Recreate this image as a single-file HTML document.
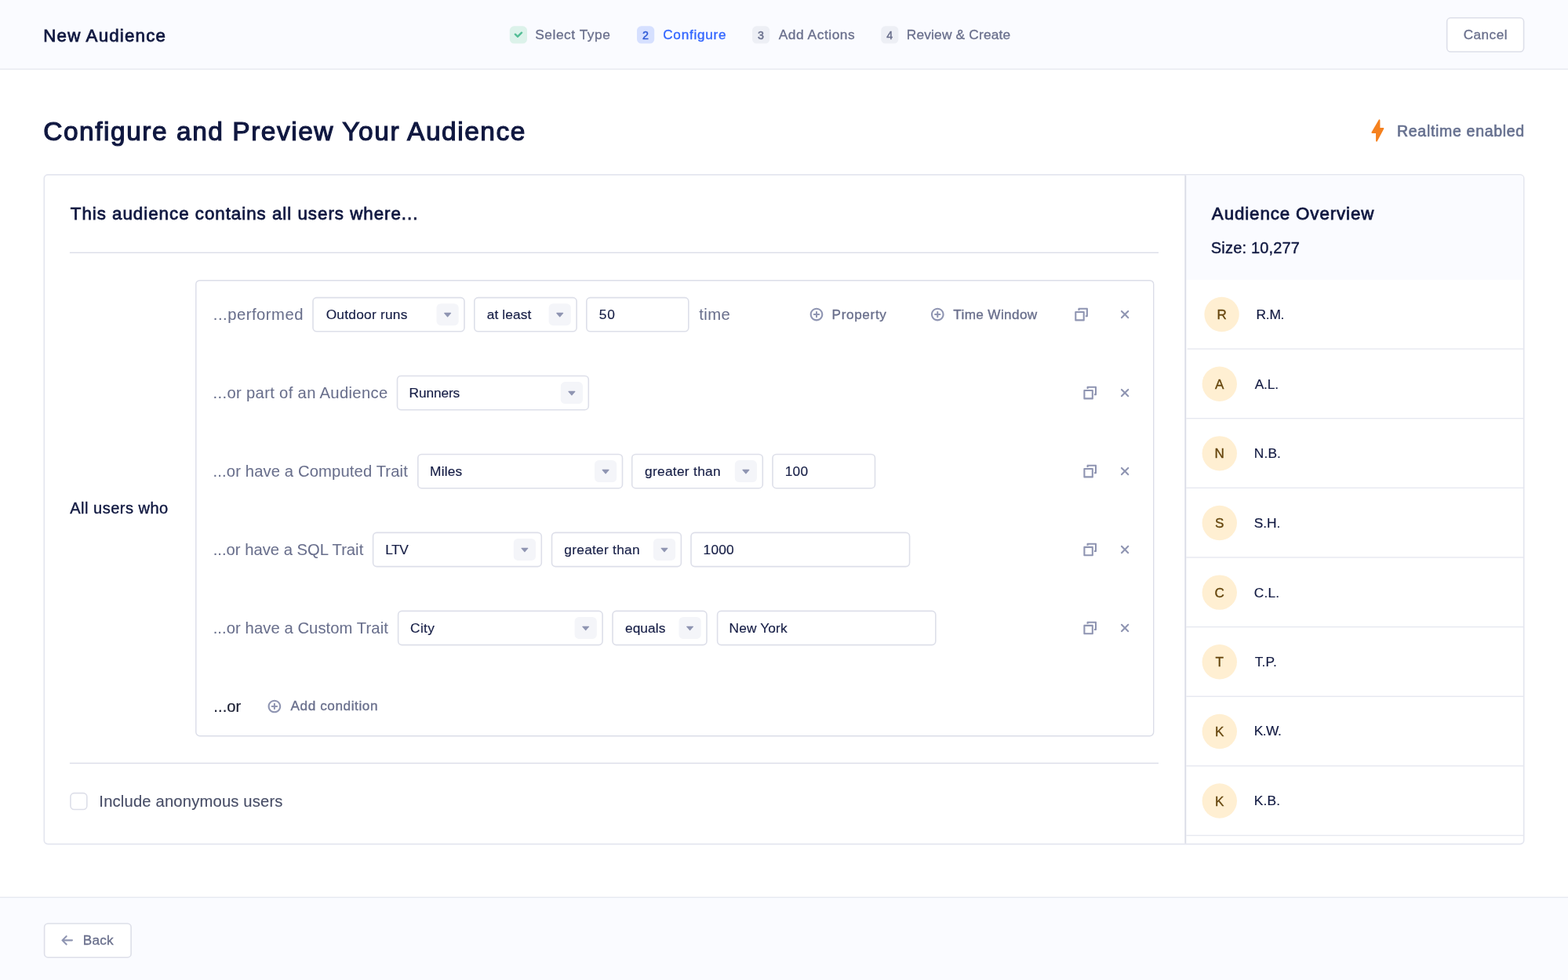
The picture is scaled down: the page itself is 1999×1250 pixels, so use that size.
<!DOCTYPE html>
<html lang="en">
<head>
<meta charset="utf-8">
<title>New Audience</title>
<style>
*{box-sizing:border-box;margin:0;padding:0}
html{width:1999px;height:1250px;overflow:hidden;background:#fff}
body{width:1999px;height:1250px;overflow:hidden;position:relative;font-family:"Liberation Sans",Arial,sans-serif;color:#101840}
#stage{position:absolute;left:0;top:0;width:1440px;height:900px;transform:scale(1.38819);transform-origin:0 0;will-change:transform}
.t{position:absolute;white-space:pre;line-height:24px;height:24px}
#g{display:block;position:absolute;left:0;top:0;overflow:visible}
</style>
</head>
<body>
<div id="stage">
<svg id="g" viewBox="0 0 1999 1250" width="1440" height="900.4502" font-family="'Liberation Sans',Arial,sans-serif">
<rect x="0" y="0" width="1999" height="87.46" rx="0" fill="#FAFBFF"/>
<rect x="0" y="87.46" width="1999" height="1.39" rx="0" fill="#E6E8F0"/>
<rect x="649.8" y="33.32" width="22.21" height="22.21" rx="5.55" fill="#DCF2EA"/>
<rect x="812" y="33.32" width="22.21" height="22.21" rx="5.55" fill="#D6E0FF"/>
<text x="823.11" y="49.6" font-size="14.3" text-anchor="middle" fill="#2F5AD6" stroke="#2F5AD6" stroke-width="0.44">2</text>
<rect x="959" y="33.32" width="22.21" height="22.21" rx="5.55" fill="#EDEFF5"/>
<text x="970.11" y="49.6" font-size="14.3" text-anchor="middle" fill="#696F8C" stroke="#696F8C" stroke-width="0.44">3</text>
<rect x="1123.2" y="33.32" width="22.21" height="22.21" rx="5.55" fill="#EDEFF5"/>
<text x="1134.31" y="49.6" font-size="14.3" text-anchor="middle" fill="#696F8C" stroke="#696F8C" stroke-width="0.44">4</text>
<path transform="translate(652.9 35.65) scale(1.0064)" d="M12 5c-.28 0-.53.11-.71.29L7 9.59l-2.29-2.3a1.003 1.003 0 00-1.42 1.42l3 3c.18.18.43.29.71.29s.53-.11.71-.29l5-5A1.003 1.003 0 0012 5z" fill="#52BD95" fill-rule="evenodd" stroke="#52BD95" stroke-width="0.5" stroke-linejoin="round"/>
<rect x="1844.7" y="22.8" width="97.9" height="43.2" rx="4.75" fill="#fff" stroke="#DDDFE9" stroke-width="1.6"/>
<path transform="translate(1736 146) scale(0.03200)" d="M702 230 L704 558 L858 558 L596 1052 L594 718 L420 718 Z" fill="#F5811F" stroke="#F5811F" stroke-width="60" stroke-linejoin="round"/>
<rect x="56.28" y="222.86" width="1886.44" height="853.73" rx="4.7" fill="#fff" stroke="#E4E6EF" stroke-width="1.7"/>
<path d="M1511.15 223.5 H1938.08 Q1942.08 223.5 1942.08 227.5 V356.77 H1511.15 Z" fill="#FAFBFF"/>
<rect x="1510.35" y="223.5" width="1.9" height="852.35" fill="#DADCE7"/>
<rect x="1513.65" y="444.36" width="428.43" height="1.39" fill="#E6E8F0"/>
<circle cx="1557.6" cy="401.05" r="22.21" fill="#FFEFD2"/>
<text x="1557.6" y="407" font-size="17.07" text-anchor="middle" fill="#66460D" stroke="#66460D" stroke-width="0.35">R</text>
<rect x="1512.25" y="533" width="429.83" height="1.39" fill="#E6E8F0"/>
<circle cx="1554.8" cy="489.7" r="22.21" fill="#FFEFD2"/>
<text x="1554.8" y="495.65" font-size="17.07" text-anchor="middle" fill="#66460D" stroke="#66460D" stroke-width="0.35">A</text>
<rect x="1512.25" y="621.65" width="429.83" height="1.39" fill="#E6E8F0"/>
<circle cx="1554.8" cy="578.35" r="22.21" fill="#FFEFD2"/>
<text x="1554.8" y="584.3" font-size="17.07" text-anchor="middle" fill="#66460D" stroke="#66460D" stroke-width="0.35">N</text>
<rect x="1512.25" y="710.3" width="429.83" height="1.39" fill="#E6E8F0"/>
<circle cx="1554.8" cy="667" r="22.21" fill="#FFEFD2"/>
<text x="1554.8" y="672.95" font-size="17.07" text-anchor="middle" fill="#66460D" stroke="#66460D" stroke-width="0.35">S</text>
<rect x="1512.25" y="798.96" width="429.83" height="1.39" fill="#E6E8F0"/>
<circle cx="1554.8" cy="755.65" r="22.21" fill="#FFEFD2"/>
<text x="1554.8" y="761.6" font-size="17.07" text-anchor="middle" fill="#66460D" stroke="#66460D" stroke-width="0.35">C</text>
<rect x="1512.25" y="887.6" width="429.83" height="1.39" fill="#E6E8F0"/>
<circle cx="1554.8" cy="844.3" r="22.21" fill="#FFEFD2"/>
<text x="1554.8" y="850.25" font-size="17.07" text-anchor="middle" fill="#66460D" stroke="#66460D" stroke-width="0.35">T</text>
<rect x="1512.25" y="976.25" width="429.83" height="1.39" fill="#E6E8F0"/>
<circle cx="1554.8" cy="932.95" r="22.21" fill="#FFEFD2"/>
<text x="1554.8" y="938.9" font-size="17.07" text-anchor="middle" fill="#66460D" stroke="#66460D" stroke-width="0.35">K</text>
<rect x="1512.25" y="1064.91" width="429.83" height="1.39" fill="#E6E8F0"/>
<circle cx="1554.8" cy="1021.6" r="22.21" fill="#FFEFD2"/>
<text x="1554.8" y="1027.55" font-size="17.07" text-anchor="middle" fill="#66460D" stroke="#66460D" stroke-width="0.35">K</text>
<rect x="88.84" y="321.61" width="1388.19" height="1.39" fill="#DBDDE8"/>
<rect x="88.84" y="972.8" width="1388.19" height="1.39" fill="#DBDDE8"/>
<rect x="249.79" y="357.69" width="1220.91" height="581.01" rx="4.86" fill="none" stroke="#DBDDE8" stroke-width="1.39"/>
<rect x="399" y="379.6" width="193" height="43.2" rx="4.75" fill="#fff" stroke="#DDDFE9" stroke-width="1.6"/>
<rect x="556.5" y="387.2" width="28.2" height="28" rx="5.55" fill="#F4F5F9"/>
<path transform="translate(561.58 392.08) scale(1.1279)" d="M12 6.5c0-.28-.22-.5-.5-.5h-7a.495.495 0 00-.37.83l3.5 4c.09.1.22.17.37.17s.28-.07.37-.17l3.5-4c.08-.09.13-.2.13-.33z" fill="#8F95B2" fill-rule="evenodd"/>
<rect x="604.8" y="379.6" width="130.3" height="43.2" rx="4.75" fill="#fff" stroke="#DDDFE9" stroke-width="1.6"/>
<rect x="699.6" y="387.2" width="28.2" height="28" rx="5.55" fill="#F4F5F9"/>
<path transform="translate(704.68 392.08) scale(1.1279)" d="M12 6.5c0-.28-.22-.5-.5-.5h-7a.495.495 0 00-.37.83l3.5 4c.09.1.22.17.37.17s.28-.07.37-.17l3.5-4c.08-.09.13-.2.13-.33z" fill="#8F95B2" fill-rule="evenodd"/>
<rect x="747.8" y="379.6" width="130" height="43.2" rx="4.75" fill="#fff" stroke="#DDDFE9" stroke-width="1.6"/>
<path transform="translate(1032.67 392.77) scale(1.0411)" d="M10.99 6.99h-2v-2c0-.55-.45-1-1-1s-1 .45-1 1v2h-2c-.55 0-1 .45-1 1s.45 1 1 1h2v2c0 .55.45 1 1 1s1-.45 1-1v-2h2c.55 0 1-.45 1-1s-.45-1-1-1zm-3-7c-4.42 0-8 3.58-8 8s3.58 8 8 8 8-3.58 8-8-3.58-8-8-8zm0 14c-3.31 0-6-2.69-6-6s2.69-6 6-6 6 2.69 6 6-2.69 6-6 6z" fill="#8F95B2" fill-rule="evenodd"/>
<path transform="translate(1186.97 392.77) scale(1.0411)" d="M10.99 6.99h-2v-2c0-.55-.45-1-1-1s-1 .45-1 1v2h-2c-.55 0-1 .45-1 1s.45 1 1 1h2v2c0 .55.45 1 1 1s1-.45 1-1v-2h2c.55 0 1-.45 1-1s-.45-1-1-1zm-3-7c-4.42 0-8 3.58-8 8s3.58 8 8 8 8-3.58 8-8-3.58-8-8-8zm0 14c-3.31 0-6-2.69-6-6s2.69-6 6-6 6 2.69 6 6-2.69 6-6 6z" fill="#8F95B2" fill-rule="evenodd"/>
<path transform="translate(1370.27 392.77) scale(1.0411)" d="M15 0H5c-.55 0-1 .45-1 1v2h2V2h8v7h-1v2h2c.55 0 1-.45 1-1V1c0-.55-.45-1-1-1zm-4 4H1c-.55 0-1 .45-1 1v10c0 .55.45 1 1 1h10c.55 0 1-.45 1-1V5c0-.55-.45-1-1-1zm-1 10H2V6h8v8z" fill="#8F95B2" fill-rule="evenodd"/>
<path transform="translate(1425.77 392.77) scale(1.0411)" d="M9.41 8l3.29-3.29c.19-.18.3-.43.3-.71a1.003 1.003 0 00-1.71-.71L8 6.59l-3.29-3.3a1.003 1.003 0 00-1.42 1.42L6.59 8 3.3 11.29c-.19.18-.3.43-.3.71a1.003 1.003 0 001.71.71L8 9.41l3.29 3.29c.18.19.43.3.71.3a1.003 1.003 0 00.71-1.71L9.41 8z" fill="#8F95B2" fill-rule="evenodd"/>
<rect x="506.5" y="479.5" width="243.8" height="43.2" rx="4.75" fill="#fff" stroke="#DDDFE9" stroke-width="1.6"/>
<rect x="714.8" y="487.1" width="28.2" height="28" rx="5.55" fill="#F4F5F9"/>
<path transform="translate(719.88 491.98) scale(1.1279)" d="M12 6.5c0-.28-.22-.5-.5-.5h-7a.495.495 0 00-.37.83l3.5 4c.09.1.22.17.37.17s.28-.07.37-.17l3.5-4c.08-.09.13-.2.13-.33z" fill="#8F95B2" fill-rule="evenodd"/>
<rect x="532.8" y="579.5" width="260.7" height="43.2" rx="4.75" fill="#fff" stroke="#DDDFE9" stroke-width="1.6"/>
<rect x="758" y="587.1" width="28.2" height="28" rx="5.55" fill="#F4F5F9"/>
<path transform="translate(763.08 591.98) scale(1.1279)" d="M12 6.5c0-.28-.22-.5-.5-.5h-7a.495.495 0 00-.37.83l3.5 4c.09.1.22.17.37.17s.28-.07.37-.17l3.5-4c.08-.09.13-.2.13-.33z" fill="#8F95B2" fill-rule="evenodd"/>
<rect x="805.7" y="579.5" width="166.6" height="43.2" rx="4.75" fill="#fff" stroke="#DDDFE9" stroke-width="1.6"/>
<rect x="936.8" y="587.1" width="28.2" height="28" rx="5.55" fill="#F4F5F9"/>
<path transform="translate(941.88 591.98) scale(1.1279)" d="M12 6.5c0-.28-.22-.5-.5-.5h-7a.495.495 0 00-.37.83l3.5 4c.09.1.22.17.37.17s.28-.07.37-.17l3.5-4c.08-.09.13-.2.13-.33z" fill="#8F95B2" fill-rule="evenodd"/>
<rect x="985" y="579.5" width="130.5" height="43.2" rx="4.75" fill="#fff" stroke="#DDDFE9" stroke-width="1.6"/>
<rect x="475.6" y="679.4" width="214.7" height="43.2" rx="4.75" fill="#fff" stroke="#DDDFE9" stroke-width="1.6"/>
<rect x="654.8" y="687" width="28.2" height="28" rx="5.55" fill="#F4F5F9"/>
<path transform="translate(659.88 691.88) scale(1.1279)" d="M12 6.5c0-.28-.22-.5-.5-.5h-7a.495.495 0 00-.37.83l3.5 4c.09.1.22.17.37.17s.28-.07.37-.17l3.5-4c.08-.09.13-.2.13-.33z" fill="#8F95B2" fill-rule="evenodd"/>
<rect x="703.5" y="679.4" width="164.9" height="43.2" rx="4.75" fill="#fff" stroke="#DDDFE9" stroke-width="1.6"/>
<rect x="832.9" y="687" width="28.2" height="28" rx="5.55" fill="#F4F5F9"/>
<path transform="translate(837.98 691.88) scale(1.1279)" d="M12 6.5c0-.28-.22-.5-.5-.5h-7a.495.495 0 00-.37.83l3.5 4c.09.1.22.17.37.17s.28-.07.37-.17l3.5-4c.08-.09.13-.2.13-.33z" fill="#8F95B2" fill-rule="evenodd"/>
<rect x="881" y="679.4" width="278.6" height="43.2" rx="4.75" fill="#fff" stroke="#DDDFE9" stroke-width="1.6"/>
<rect x="507.6" y="779.4" width="260.5" height="43.2" rx="4.75" fill="#fff" stroke="#DDDFE9" stroke-width="1.6"/>
<rect x="732.6" y="787" width="28.2" height="28" rx="5.55" fill="#F4F5F9"/>
<path transform="translate(737.68 791.88) scale(1.1279)" d="M12 6.5c0-.28-.22-.5-.5-.5h-7a.495.495 0 00-.37.83l3.5 4c.09.1.22.17.37.17s.28-.07.37-.17l3.5-4c.08-.09.13-.2.13-.33z" fill="#8F95B2" fill-rule="evenodd"/>
<rect x="781" y="779.4" width="120" height="43.2" rx="4.75" fill="#fff" stroke="#DDDFE9" stroke-width="1.6"/>
<rect x="865.5" y="787" width="28.2" height="28" rx="5.55" fill="#F4F5F9"/>
<path transform="translate(870.58 791.88) scale(1.1279)" d="M12 6.5c0-.28-.22-.5-.5-.5h-7a.495.495 0 00-.37.83l3.5 4c.09.1.22.17.37.17s.28-.07.37-.17l3.5-4c.08-.09.13-.2.13-.33z" fill="#8F95B2" fill-rule="evenodd"/>
<rect x="914.6" y="779.4" width="278.2" height="43.2" rx="4.75" fill="#fff" stroke="#DDDFE9" stroke-width="1.6"/>
<path transform="translate(1381.37 492.77) scale(1.0411)" d="M15 0H5c-.55 0-1 .45-1 1v2h2V2h8v7h-1v2h2c.55 0 1-.45 1-1V1c0-.55-.45-1-1-1zm-4 4H1c-.55 0-1 .45-1 1v10c0 .55.45 1 1 1h10c.55 0 1-.45 1-1V5c0-.55-.45-1-1-1zm-1 10H2V6h8v8z" fill="#8F95B2" fill-rule="evenodd"/>
<path transform="translate(1425.77 492.77) scale(1.0411)" d="M9.41 8l3.29-3.29c.19-.18.3-.43.3-.71a1.003 1.003 0 00-1.71-.71L8 6.59l-3.29-3.3a1.003 1.003 0 00-1.42 1.42L6.59 8 3.3 11.29c-.19.18-.3.43-.3.71a1.003 1.003 0 001.71.71L8 9.41l3.29 3.29c.18.19.43.3.71.3a1.003 1.003 0 00.71-1.71L9.41 8z" fill="#8F95B2" fill-rule="evenodd"/>
<path transform="translate(1381.37 592.77) scale(1.0411)" d="M15 0H5c-.55 0-1 .45-1 1v2h2V2h8v7h-1v2h2c.55 0 1-.45 1-1V1c0-.55-.45-1-1-1zm-4 4H1c-.55 0-1 .45-1 1v10c0 .55.45 1 1 1h10c.55 0 1-.45 1-1V5c0-.55-.45-1-1-1zm-1 10H2V6h8v8z" fill="#8F95B2" fill-rule="evenodd"/>
<path transform="translate(1425.77 592.77) scale(1.0411)" d="M9.41 8l3.29-3.29c.19-.18.3-.43.3-.71a1.003 1.003 0 00-1.71-.71L8 6.59l-3.29-3.3a1.003 1.003 0 00-1.42 1.42L6.59 8 3.3 11.29c-.19.18-.3.43-.3.71a1.003 1.003 0 001.71.71L8 9.41l3.29 3.29c.18.19.43.3.71.3a1.003 1.003 0 00.71-1.71L9.41 8z" fill="#8F95B2" fill-rule="evenodd"/>
<path transform="translate(1381.37 692.67) scale(1.0411)" d="M15 0H5c-.55 0-1 .45-1 1v2h2V2h8v7h-1v2h2c.55 0 1-.45 1-1V1c0-.55-.45-1-1-1zm-4 4H1c-.55 0-1 .45-1 1v10c0 .55.45 1 1 1h10c.55 0 1-.45 1-1V5c0-.55-.45-1-1-1zm-1 10H2V6h8v8z" fill="#8F95B2" fill-rule="evenodd"/>
<path transform="translate(1425.77 692.67) scale(1.0411)" d="M9.41 8l3.29-3.29c.19-.18.3-.43.3-.71a1.003 1.003 0 00-1.71-.71L8 6.59l-3.29-3.3a1.003 1.003 0 00-1.42 1.42L6.59 8 3.3 11.29c-.19.18-.3.43-.3.71a1.003 1.003 0 001.71.71L8 9.41l3.29 3.29c.18.19.43.3.71.3a1.003 1.003 0 00.71-1.71L9.41 8z" fill="#8F95B2" fill-rule="evenodd"/>
<path transform="translate(1381.37 792.67) scale(1.0411)" d="M15 0H5c-.55 0-1 .45-1 1v2h2V2h8v7h-1v2h2c.55 0 1-.45 1-1V1c0-.55-.45-1-1-1zm-4 4H1c-.55 0-1 .45-1 1v10c0 .55.45 1 1 1h10c.55 0 1-.45 1-1V5c0-.55-.45-1-1-1zm-1 10H2V6h8v8z" fill="#8F95B2" fill-rule="evenodd"/>
<path transform="translate(1425.77 792.67) scale(1.0411)" d="M9.41 8l3.29-3.29c.19-.18.3-.43.3-.71a1.003 1.003 0 00-1.71-.71L8 6.59l-3.29-3.3a1.003 1.003 0 00-1.42 1.42L6.59 8 3.3 11.29c-.19.18-.3.43-.3.71a1.003 1.003 0 001.71.71L8 9.41l3.29 3.29c.18.19.43.3.71.3a1.003 1.003 0 00.71-1.71L9.41 8z" fill="#8F95B2" fill-rule="evenodd"/>
<path transform="translate(341.57 892.67) scale(1.0411)" d="M10.99 6.99h-2v-2c0-.55-.45-1-1-1s-1 .45-1 1v2h-2c-.55 0-1 .45-1 1s.45 1 1 1h2v2c0 .55.45 1 1 1s1-.45 1-1v-2h2c.55 0 1-.45 1-1s-.45-1-1-1zm-3-7c-4.42 0-8 3.58-8 8s3.58 8 8 8 8-3.58 8-8-3.58-8-8-8zm0 14c-3.31 0-6-2.69-6-6s2.69-6 6-6 6 2.69 6 6-2.69 6-6 6z" fill="#8F95B2" fill-rule="evenodd"/>
<rect x="89.9" y="1011.6" width="20.9" height="20.9" rx="4.75" fill="#fff" stroke="#DDDFE9" stroke-width="1.6"/>
<rect x="0" y="1145.26" width="1999" height="104.74" rx="0" fill="#FAFBFF"/>
<rect x="0" y="1143.87" width="1999" height="1.39" rx="0" fill="#E6E8F0"/>
<rect x="56.6" y="1178" width="110.5" height="43.2" rx="4.75" fill="#fff" stroke="#DDDFE9" stroke-width="1.6"/>
<path transform="translate(77.37 1191.07) scale(1.0411)" d="M13.99 6.99H4.41L7.7 3.7a1.003 1.003 0 00-1.42-1.42l-5 5c-.18.18-.29.43-.29.71s.11.53.29.71l5 5a1.003 1.003 0 001.42-1.42L4.41 8.99H14c.55 0 1-.45 1-1s-.45-1-1.01-1z" fill="#8F95B2" fill-rule="evenodd"/>
</svg>
<span class="t" style="left:39.81px;top:19.82px;font-size:16.08px;letter-spacing:0.851px;color:#101840;-webkit-text-stroke:0.56px #101840;">New Audience</span>
<span class="t" style="left:491.48px;top:20.02px;font-size:12.48px;letter-spacing:0.396px;color:#696F8C;-webkit-text-stroke:0.22px #696F8C;">Select Type</span>
<span class="t" style="left:608.89px;top:20.02px;font-size:12.36px;letter-spacing:0.540px;color:#3366FF;-webkit-text-stroke:0.25px #3366FF;">Configure</span>
<span class="t" style="left:715.15px;top:20.02px;font-size:12.48px;letter-spacing:0.396px;color:#696F8C;-webkit-text-stroke:0.22px #696F8C;">Add Actions</span>
<span class="t" style="left:832.57px;top:20.02px;font-size:12.48px;letter-spacing:0.129px;color:#696F8C;-webkit-text-stroke:0.22px #696F8C;">Review &amp; Create</span>
<span class="t" style="left:1344.02px;top:19.87px;font-size:12.36px;letter-spacing:0.331px;color:#696F8C;-webkit-text-stroke:0.22px #696F8C;">Cancel</span>
<span class="t" style="left:39.81px;top:109.16px;font-size:24.12px;letter-spacing:1.106px;color:#101840;-webkit-text-stroke:0.84px #101840;">Configure and Preview Your Audience</span>
<span class="t" style="left:1283.01px;top:108.13px;font-size:14.07px;letter-spacing:0.490px;color:#66708F;-webkit-text-stroke:0.45px #66708F;">Realtime enabled</span>
<span class="t" style="left:64.66px;top:183.99px;font-size:16.08px;letter-spacing:0.711px;color:#101840;-webkit-text-stroke:0.56px #101840;">This audience contains all users where...</span>
<span class="t" style="left:64.30px;top:454.84px;font-size:14.42px;letter-spacing:0.360px;color:#101840;-webkit-text-stroke:0.29px #101840;">All users who</span>
<span class="t" style="left:195.77px;top:276.98px;font-size:14.56px;letter-spacing:0.380px;color:#696F8C;-webkit-text-stroke:0.04px #696F8C;">...performed</span>
<span class="t" style="left:299.43px;top:277.33px;font-size:12.48px;letter-spacing:0.177px;color:#151D45;-webkit-text-stroke:0.12px #151D45;">Outdoor runs</span>
<span class="t" style="left:447.10px;top:277.33px;font-size:12.48px;letter-spacing:0.082px;color:#151D45;-webkit-text-stroke:0.12px #151D45;">at least</span>
<span class="t" style="left:550.19px;top:277.19px;font-size:12.48px;letter-spacing:0.576px;color:#151D45;-webkit-text-stroke:0.12px #151D45;">50</span>
<span class="t" style="left:641.96px;top:276.98px;font-size:14.56px;letter-spacing:0.336px;color:#696F8C;-webkit-text-stroke:0.04px #696F8C;">time</span>
<span class="t" style="left:763.99px;top:277.19px;font-size:12.36px;letter-spacing:0.463px;color:#696F8C;-webkit-text-stroke:0.25px #696F8C;">Property</span>
<span class="t" style="left:875.43px;top:277.19px;font-size:12.36px;letter-spacing:0.267px;color:#696F8C;-webkit-text-stroke:0.25px #696F8C;">Time Window</span>
<span class="t" style="left:195.62px;top:349.02px;font-size:14.56px;letter-spacing:0.246px;color:#696F8C;-webkit-text-stroke:0.04px #696F8C;">...or part of an Audience</span>
<span class="t" style="left:375.71px;top:349.22px;font-size:12.48px;letter-spacing:-0.084px;color:#151D45;-webkit-text-stroke:0.12px #151D45;">Runners</span>
<span class="t" style="left:195.62px;top:421.05px;font-size:14.56px;letter-spacing:0.100px;color:#696F8C;-webkit-text-stroke:0.04px #696F8C;">...or have a Computed Trait</span>
<span class="t" style="left:394.80px;top:421.26px;font-size:12.48px;letter-spacing:0.126px;color:#151D45;-webkit-text-stroke:0.12px #151D45;">Miles</span>
<span class="t" style="left:592.18px;top:421.26px;font-size:12.48px;letter-spacing:0.210px;color:#151D45;-webkit-text-stroke:0.12px #151D45;">greater than</span>
<span class="t" style="left:720.84px;top:421.26px;font-size:12.48px;letter-spacing:0.180px;color:#151D45;-webkit-text-stroke:0.12px #151D45;">100</span>
<span class="t" style="left:195.70px;top:493.09px;font-size:14.56px;letter-spacing:0.014px;color:#696F8C;-webkit-text-stroke:0.04px #696F8C;">...or have a SQL Trait</span>
<span class="t" style="left:353.81px;top:493.29px;font-size:12.48px;letter-spacing:-0.288px;color:#151D45;-webkit-text-stroke:0.12px #151D45;">LTV</span>
<span class="t" style="left:518.20px;top:493.29px;font-size:12.48px;letter-spacing:0.190px;color:#151D45;-webkit-text-stroke:0.12px #151D45;">greater than</span>
<span class="t" style="left:645.85px;top:493.29px;font-size:12.48px;letter-spacing:0.144px;color:#151D45;-webkit-text-stroke:0.12px #151D45;">1000</span>
<span class="t" style="left:195.70px;top:565.12px;font-size:14.56px;letter-spacing:0.063px;color:#696F8C;-webkit-text-stroke:0.04px #696F8C;">...or have a Custom Trait</span>
<span class="t" style="left:376.79px;top:565.33px;font-size:12.48px;letter-spacing:0.264px;color:#151D45;-webkit-text-stroke:0.12px #151D45;">City</span>
<span class="t" style="left:574.10px;top:565.33px;font-size:12.48px;letter-spacing:0.058px;color:#151D45;-webkit-text-stroke:0.12px #151D45;">equals</span>
<span class="t" style="left:669.62px;top:565.33px;font-size:12.48px;letter-spacing:0.093px;color:#151D45;-webkit-text-stroke:0.12px #151D45;">New York</span>
<span class="t" style="left:196.20px;top:637.09px;font-size:14.56px;letter-spacing:0.036px;color:#1b1f33;-webkit-text-stroke:0.15px #1b1f33;">...or</span>
<span class="t" style="left:266.94px;top:637.29px;font-size:12.36px;letter-spacing:0.420px;color:#696F8C;-webkit-text-stroke:0.25px #696F8C;">Add condition</span>
<span class="t" style="left:91.03px;top:724.47px;font-size:14.56px;letter-spacing:0.131px;color:#474D66;-webkit-text-stroke:0.09px #474D66;">Include anonymous users</span>
<span class="t" style="left:76.19px;top:852.11px;font-size:12.36px;letter-spacing:0.144px;color:#696F8C;-webkit-text-stroke:0.25px #696F8C;">Back</span>
<span class="t" style="left:1112.86px;top:183.99px;font-size:16.08px;letter-spacing:0.639px;color:#101840;-webkit-text-stroke:0.56px #101840;">Audience Overview</span>
<span class="t" style="left:1112.14px;top:216.25px;font-size:14.42px;letter-spacing:0.124px;color:#101840;-webkit-text-stroke:0.29px #101840;">Size: 10,277</span>
<span class="t" style="left:1153.70px;top:277.11px;font-size:12.48px;letter-spacing:-0.168px;color:#101840;-webkit-text-stroke:0.12px #101840;">R.M.</span>
<span class="t" style="left:1152.41px;top:340.97px;font-size:12.48px;letter-spacing:-0.144px;color:#101840;-webkit-text-stroke:0.12px #101840;">A.L.</span>
<span class="t" style="left:1151.69px;top:404.83px;font-size:12.48px;letter-spacing:0.120px;color:#101840;-webkit-text-stroke:0.12px #101840;">N.B.</span>
<span class="t" style="left:1151.69px;top:468.69px;font-size:12.48px;letter-spacing:0.000px;color:#101840;-webkit-text-stroke:0.12px #101840;">S.H.</span>
<span class="t" style="left:1151.69px;top:532.55px;font-size:12.48px;letter-spacing:0.120px;color:#101840;-webkit-text-stroke:0.12px #101840;">C.L.</span>
<span class="t" style="left:1152.41px;top:596.41px;font-size:12.48px;letter-spacing:0.120px;color:#101840;-webkit-text-stroke:0.12px #101840;">T.P.</span>
<span class="t" style="left:1151.69px;top:660.27px;font-size:12.48px;letter-spacing:-0.360px;color:#101840;-webkit-text-stroke:0.12px #101840;">K.W.</span>
<span class="t" style="left:1151.69px;top:724.13px;font-size:12.48px;letter-spacing:0.120px;color:#101840;-webkit-text-stroke:0.12px #101840;">K.B.</span>
</div>
</body>
</html>
